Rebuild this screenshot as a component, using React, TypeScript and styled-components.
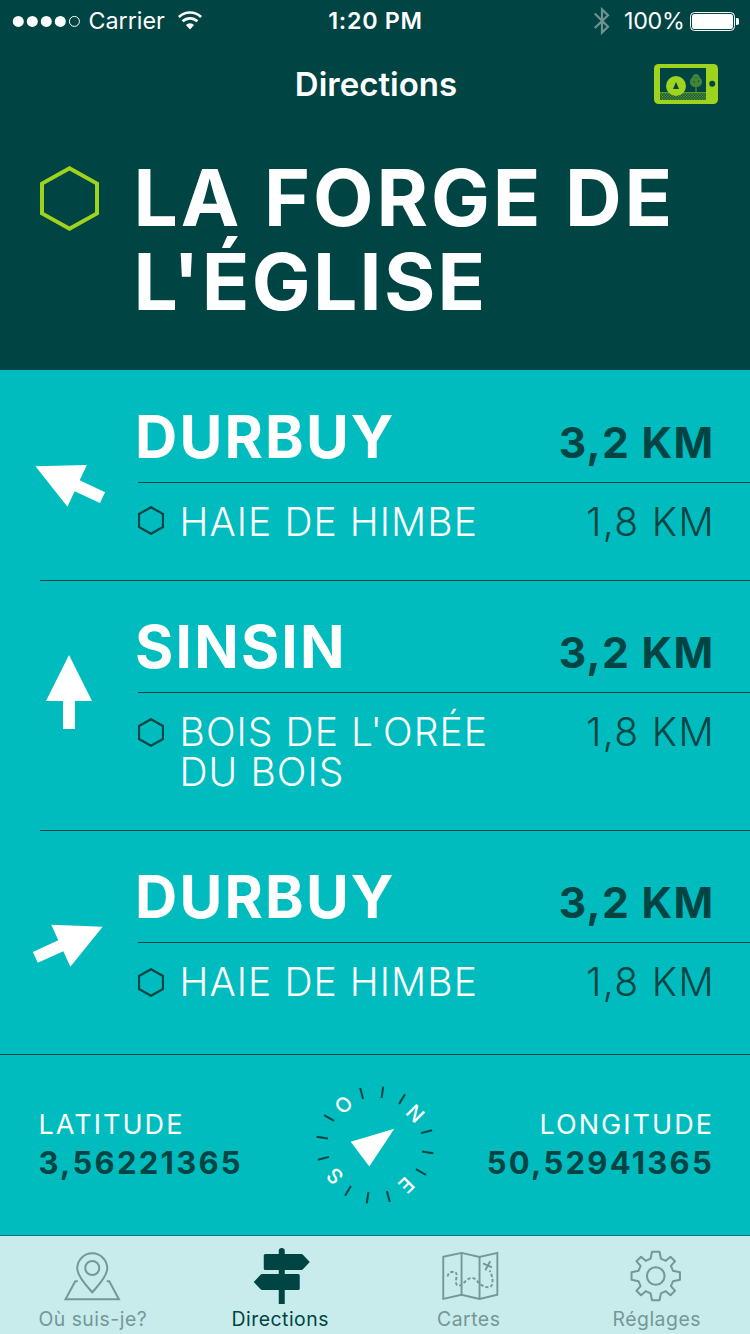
import React from 'react';
import styled, { createGlobalStyle } from 'styled-components';

const teal = '#00bcbe';
const dark = '#004443';
const lime = '#9ed31e';
const muted = '#759796';

const GlobalStyle = createGlobalStyle`
  * { box-sizing: border-box; }
  body {
    margin: 0;
    background: ${teal};
    font-family: Inter, "Liberation Sans", sans-serif;
  }
  svg { display: block; flex: none; }
`;

const Screen = styled.div`
  width: 750px;
  height: 1334px;
  display: flex;
  flex-direction: column;
  overflow: hidden;
  background: ${teal};
  color: #fff;
`;

const Header = styled.header`
  height: 370px;
  background: ${dark};
`;

const StatusBar = styled.div`
  display: grid;
  grid-template-columns: 1fr auto 1fr;
  height: 40px;
  padding: 0 11px 0 12px;
  line-height: 40px;
  font-size: 23.3px;
  white-space: nowrap;
`;

const StatusGroup = styled.div<{ $end?: boolean }>`
  display: flex;
  align-items: center;
  justify-content: ${p => (p.$end ? 'flex-end' : 'flex-start')};
`;

const Carrier = styled.span`
  margin: 0 13px 0 7.5px;
`;

const Clock = styled.span`
  padding-top: 1px;
  font-weight: 600;
  letter-spacing: 0.7px;
`;

const BatteryLevel = styled.span`
  margin: 0 5.5px 0 13.5px;
  letter-spacing: -0.3px;
`;

const NavBar = styled.div`
  display: grid;
  grid-template-columns: 1fr auto 1fr;
  align-items: center;
  height: 88px;
  padding: 0 32px;
`;

const NavTitle = styled.h2`
  grid-column: 2;
  margin: 0;
  padding-left: 2px;
  font-size: 33px;
  font-weight: 600;
  line-height: 44px;
`;

const NavAction = styled.div`
  justify-self: end;
`;

const Place = styled.div`
  display: flex;
  align-items: flex-start;
  padding: 28px 0 0 40px;
`;

const PlaceMark = styled.div`
  width: 93.5px;
  padding-top: 10px;
`;

const PlaceName = styled.h1`
  display: flex;
  flex-direction: column;
  margin: 0;
  font-size: 78.5px;
  font-weight: 700;
  line-height: 84px;
  white-space: nowrap;
`;

const PlaceLine = styled.span<{ $track: number }>`
  letter-spacing: ${p => p.$track}px;
`;

const Row = styled.section<{ $height: number; $first?: boolean }>`
  display: grid;
  grid-template-columns: 98px 1fr;
  height: ${p => p.$height}px;
  margin-left: 40px;
  border-top: 1px solid ${p => (p.$first ? 'transparent' : dark)};
`;

const ArrowCell = styled.div`
  height: 222px;
  display: flex;
  align-items: center;
  padding-left: 6px;
`;

const ArrowIcon = styled.svg<{ $angle: number }>`
  transform: rotate(${p => p.$angle}deg);
  overflow: visible;
`;

const Town = styled.div`
  display: flex;
  justify-content: space-between;
  align-items: baseline;
  height: 112px;
  padding: 36px 35.7px 0 0;
  border-bottom: 1px solid ${dark};
`;

const TownName = styled.span`
  margin-left: -2.9px;
  font-size: 58.5px;
  font-weight: 700;
  line-height: 60px;
  letter-spacing: 2.15px;
`;

const TownDistance = styled.span`
  color: ${dark};
  font-size: 42.6px;
  font-weight: 700;
  letter-spacing: 1.25px;
`;

const Spot = styled.div`
  display: grid;
  grid-template-columns: 41.5px 1fr auto;
  padding: 19px 35px 0 0;
  font-size: 39px;
  font-weight: 300;
  line-height: 40px;
  white-space: pre-line;
`;

const SpotMark = styled.div<{ $top: number }>`
  padding-top: ${p => p.$top}px;
`;

const SpotName = styled.span`
  letter-spacing: 1.07px;
`;

const SpotDistance = styled.span`
  color: ${dark};
  letter-spacing: 1.4px;
`;

const Position = styled.section`
  display: grid;
  grid-template-columns: 1fr 120px 1fr;
  height: 181px;
  padding: 0 36px 0 38.5px;
  border-top: 1px solid ${dark};
`;

const Coordinate = styled.div<{ $end?: boolean }>`
  display: flex;
  flex-direction: column;
  padding-top: 51px;
  text-align: ${p => (p.$end ? 'right' : 'left')};
`;

const CoordLabel = styled.span`
  font-size: 27px;
  line-height: 38px;
  letter-spacing: 2.05px;
`;

const CoordValue = styled.span`
  color: ${dark};
  font-size: 31px;
  font-weight: 700;
  line-height: 37px;
  letter-spacing: 2.25px;
`;

const CompassCell = styled.div`
  padding-top: 30px;
  margin-left: -1.25px;
`;

const TabBar = styled.nav`
  display: grid;
  grid-template-columns: repeat(4, 1fr);
  flex: 1;
  border-top: 1px solid #0a7476;
  background: #c8ecec;
`;

const Tab = styled.div<{ $active?: boolean }>`
  display: flex;
  flex-direction: column;
  align-items: center;
  padding-top: 10px;
  color: ${p => (p.$active ? dark : muted)};
`;

const TabLabel = styled.span<{ $shift: number }>`
  margin: 1px ${p => p.$shift}px 0 0;
  font-size: 19.4px;
  line-height: 24px;
  letter-spacing: 0.5px;
`;

const Signal = () => (
  <svg width="69" height="14" viewBox="0 0 69 14">
    {[6.3, 20.3, 34.3, 48.3].map(x => <circle key={x} cx={x} cy="7.4" r="5.5" fill="#fff" />)}
    <circle cx="62.4" cy="7.4" r="5" fill="none" stroke="#fff" strokeWidth="1" />
  </svg>
);

const Wifi = () => (
  <svg width="24" height="20" viewBox="0 0 24 20">
    <g fill="none" stroke="#fff" strokeWidth="2.7">
      <path d="M0.9 6A16 16 0 0 1 23.1 6" />
      <path d="M4.6 10.3A10.6 10.6 0 0 1 19.4 10.3" />
    </g>
    <path d="M7.9 14A5.9 5.9 0 0 1 16.1 14L12 18.4Z" fill="#fff" />
  </svg>
);

const Bluetooth = () => (
  <svg width="16" height="28" viewBox="0 0 16 28">
    <path d="M0.8 6.5L14 19.8L8 25.6V2.4L14 8.2L0.8 21" fill="none" stroke="#6f9392" strokeWidth="2.2" />
  </svg>
);

const Battery = () => (
  <svg width="49" height="20" viewBox="0 0 49 20">
    <rect x="0.5" y="1.5" width="44" height="18" rx="4" fill="none" stroke="#fff" />
    <rect x="2" y="3" width="41" height="15" rx="2.5" fill="#fff" />
    <path d="M46 7h1.2q1.8 0 1.8 1.8v3.4q0 1.8-1.8 1.8H46z" fill="#fff" />
  </svg>
);

const DeviceIcon = () => (
  <svg width="64" height="40" viewBox="0 0 64 40">
    <defs>
      <pattern id="soil" width="2.667" height="2.667" patternUnits="userSpaceOnUse">
        <rect width="1.2" height="1.2" fill={lime} />
        <rect width="1.2" height="1.2" x="1.333" y="1.333" fill={lime} />
      </pattern>
    </defs>
    <rect width="64" height="40" rx="4.5" fill={lime} />
    <rect x="6" y="4" width="46" height="32" fill={dark} />
    <rect x="6" y="29" width="46" height="7" fill="url(#soil)" opacity="0.8" />
    <rect x="6" y="28" width="46" height="1" fill="#5f9a2c" />
    <path d="M42 10c2.2 0 3.6 1.6 3.6 3.6 1.6.8 2.4 2.4 2.4 4.4 0 3-2.4 5-6 5s-6-2-6-5c0-2 .8-3.6 2.4-4.4C38.4 11.6 39.8 10 42 10z" fill="#438536" />
    <rect x="41.3" y="20" width="1.4" height="8" fill="#438536" />
    <g fill={dark}>
      <circle cx="40" cy="18" r="0.7" />
      <circle cx="44.5" cy="17" r="0.7" />
      <circle cx="42" cy="14" r="0.6" />
    </g>
    <circle cx="22" cy="22" r="10" fill={lime} />
    <path d="M22 18L25 25H19Z" fill={dark} />
    <circle cx="58.2" cy="19.8" r="3" fill={dark} />
  </svg>
);

const BigHexagon = () => (
  <svg width="60" height="66" viewBox="0 0 60 66">
    <path d="M29.5 2.3L57 17.6V47.4L29.5 62.7L2 47.4V17.6Z" fill="none" stroke={lime} strokeWidth="4" />
  </svg>
);

const SmallHexagon = () => (
  <svg width="26" height="29" viewBox="0 0 26 29">
    <path d="M13 1.2L25 8V21L13 27.8L1 21V8Z" fill="none" stroke={dark} strokeWidth="2.2" />
  </svg>
);

const Arrow = ({ angle }: { angle: number }) => (
  <ArrowIcon $angle={angle} width="46" height="74" viewBox="0 0 46 74">
    <path d="M23 0L46 46H29V74H17V46H0Z" fill="#fff" />
  </ArrowIcon>
);

const CompassLetter = styled.text`
  fill: #fff;
  font-size: 20.5px;
  font-weight: 500;
  text-anchor: middle;
`;

const Compass = () => (
  <svg width="120" height="120" viewBox="-60 -60 120 120">
    <g transform="rotate(53)">
      {[0, 90, 180, 270].map(q =>
        [22.5, 45, 67.5].map(a => (
          <path key={q + a} d="M0-47.5V-59" stroke={dark} strokeWidth="2" transform={`rotate(${q + a})`} />
        ))
      )}
      {['N', 'E', 'S', 'O'].map((letter, i) => (
        <g key={letter} transform={`rotate(${i * 90 - 1}) translate(0 -51) rotate(-7)`}>
          <CompassLetter y="7.4">{letter}</CompassLetter>
        </g>
      ))}
    </g>
    <path d="M19.3-16.3L-24.3-3.3L-5.7 21.5Z" fill="#fff" />
  </svg>
);

const PinIcon = () => (
  <svg width="60" height="60" viewBox="1.75 0 60 60" fill="none" stroke="currentColor" strokeWidth="2">
    <path d="M30 46.3C26 41.5 15 31 15 22.3A15 15 0 0 1 45 22.3C45 31 34 41.5 30 46.3Z" />
    <circle cx="30" cy="22" r="7" />
    <path d="M15.5 35.2H13L3.3 53.2H56.7L47 35.2H44.5" />
  </svg>
);

const SignpostIcon = () => (
  <svg width="60" height="60" viewBox="-0.75 0 60 60" fill="currentColor">
    <path d="M27 58V5a3 3 0 0 1 6 0V58Z" />
    <path d="M13.5 8H49.5Q50.5 8 51.2 8.7L58 16L51.2 23.3Q50.5 24 49.5 24H13.5Q12 24 12 22.5V9.5Q12 8 13.5 8Z" />
    <path d="M46.5 28H10.5Q9.5 28 8.8 28.7L2 36L8.8 43.3Q9.5 44 10.5 44H46.5Q48 44 48 42.5V29.5Q48 28 46.5 28Z" />
  </svg>
);

const MapIcon = () => (
  <svg width="60" height="60" viewBox="-1.25 0 60 60" fill="none" stroke="currentColor" strokeWidth="1.9">
    <path d="M3 10.7L21.3 6.9L39.3 11L57.1 6.9V48.7L39.3 52.9L21.3 48.7L3 52.9Z" />
    <path d="M21.3 6.9V48.7M39.3 11V52.9" />
    <path
      d="M7.3 30.5C8 27 10 25.7 13 25.7C17.5 25.7 16.5 30 15.8 34C15 39 17.5 40.5 21.3 38.8C24.5 36.5 27 32 31.5 32C35.5 32 37 36 40.5 38.5C44 41 48 42 50.5 40.5C53.5 38 52.5 30 49.3 24.5"
      strokeDasharray="3.2 2"
    />
    <path d="M42.7 17.3L51.7 21.3M50 15.3L45 24.3" />
  </svg>
);

const gearOutline = Array.from({ length: 8 }, (_, i) => {
  const a = (i * Math.PI) / 4;
  const tooth = i % 2 === 0
    ? [[-5.2, -17.3], [-3.8, -24.2], [3.8, -24.2], [5.2, -17.3]]
    : [[-3.6, -17.8], [-3.2, -24], [3.2, -24], [3.6, -17.8]];
  return tooth
    .map(([x, y]) => `${(30 + x * Math.cos(a) - y * Math.sin(a)).toFixed(2)} ${(30 + x * Math.sin(a) + y * Math.cos(a)).toFixed(2)}`)
    .join('L');
}).join('L');

const GearIcon = () => (
  <svg width="60" height="60" viewBox="0.25 0 60 60" fill="none" stroke="currentColor" strokeWidth="2" strokeLinejoin="round">
    <path d={`M${gearOutline}Z`} />
    <circle cx="30" cy="30" r="8.8" />
  </svg>
);

const directions = [
  { town: 'DURBUY', spot: 'HAIE DE HIMBE', angle: -65, height: 210, mark: 4 },
  { town: 'SINSIN', spot: "BOIS DE L'ORÉE\nDU BOIS", angle: 0, height: 250, mark: 6 },
  { town: 'DURBUY', spot: 'HAIE DE HIMBE', angle: 65.5, height: 224, mark: 6 },
];

const tabs = [
  { label: 'Où suis-je?', Icon: PinIcon, shift: 2 },
  { label: 'Directions', Icon: SignpostIcon, shift: 2, active: true },
  { label: 'Cartes', Icon: MapIcon, shift: 0 },
  { label: 'Réglages', Icon: GearIcon, shift: -1 },
];

export default function App() {
  return (
    <Screen>
      <GlobalStyle />
      <Header>
        <StatusBar>
          <StatusGroup>
            <Signal />
            <Carrier>Carrier</Carrier>
            <Wifi />
          </StatusGroup>
          <Clock>1:20 PM</Clock>
          <StatusGroup $end>
            <Bluetooth />
            <BatteryLevel>100%</BatteryLevel>
            <Battery />
          </StatusGroup>
        </StatusBar>
        <NavBar>
          <NavTitle>Directions</NavTitle>
          <NavAction><DeviceIcon /></NavAction>
        </NavBar>
        <Place>
          <PlaceMark><BigHexagon /></PlaceMark>
          <PlaceName>
            <PlaceLine $track={2.95}>LA FORGE DE</PlaceLine>
            <PlaceLine $track={2.25}>L'ÉGLISE</PlaceLine>
          </PlaceName>
        </Place>
      </Header>
      {directions.map((d, i) => (
        <Row key={i} $height={d.height} $first={i === 0}>
          <ArrowCell><Arrow angle={d.angle} /></ArrowCell>
          <div>
            <Town>
              <TownName>{d.town}</TownName>
              <TownDistance>3,2 KM</TownDistance>
            </Town>
            <Spot>
              <SpotMark $top={d.mark}><SmallHexagon /></SpotMark>
              <SpotName>{d.spot}</SpotName>
              <SpotDistance>1,8 KM</SpotDistance>
            </Spot>
          </div>
        </Row>
      ))}
      <Position>
        <Coordinate>
          <CoordLabel>LATITUDE</CoordLabel>
          <CoordValue>3,56221365</CoordValue>
        </Coordinate>
        <CompassCell><Compass /></CompassCell>
        <Coordinate $end>
          <CoordLabel>LONGITUDE</CoordLabel>
          <CoordValue>50,52941365</CoordValue>
        </Coordinate>
      </Position>
      <TabBar>
        {tabs.map(({ label, Icon, shift, active }) => (
          <Tab key={label} $active={active}>
            <Icon />
            <TabLabel $shift={shift}>{label}</TabLabel>
          </Tab>
        ))}
      </TabBar>
    </Screen>
  );
}
